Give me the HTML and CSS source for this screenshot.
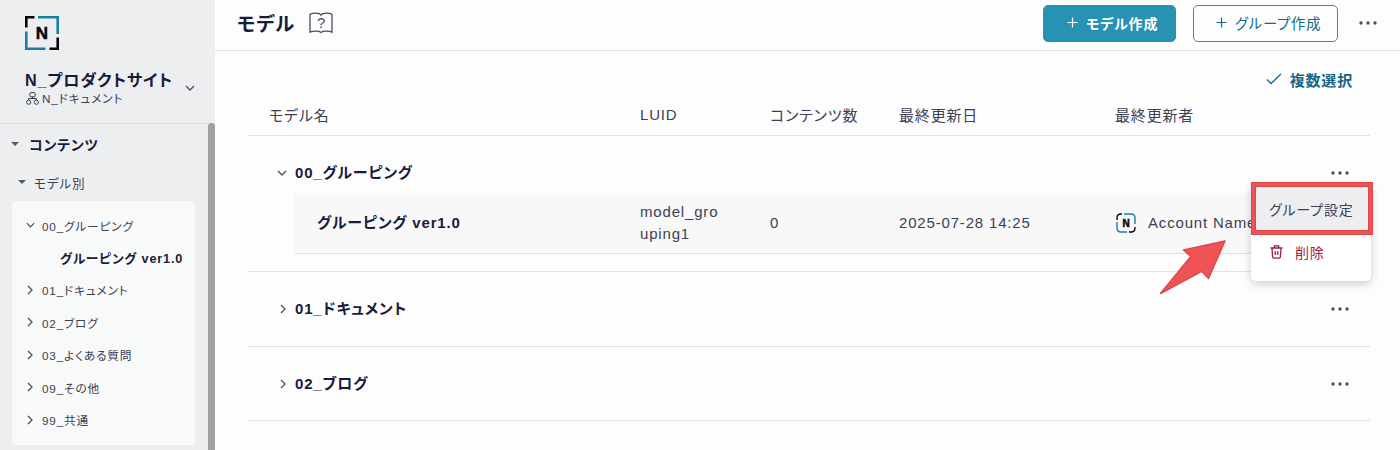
FILE: index.html
```html
<!DOCTYPE html>
<html lang="ja">
<head>
    <meta charset="UTF-8">
    <meta name="viewport" content="width=device-width, initial-scale=1">
    <title>モデル</title>
    <link rel="stylesheet" href="styles.css">
</head>
<body>
<svg class="sprite" width="0" height="0">
    <symbol id="icon-right" viewBox="0 0 8 12"><path d="M2 2l4 4-4 4"/></symbol>
    <symbol id="icon-down" viewBox="0 0 12 8"><path d="M2 2l4 4 4-4"/></symbol>
    <symbol id="icon-dots" viewBox="0 0 20 4"><circle cx="3" cy="2" r="1.7"/><circle cx="10" cy="2" r="1.7"/><circle cx="17" cy="2" r="1.7"/></symbol>
    <symbol id="icon-plus" viewBox="0 0 12 12"><path d="M6 .5v11M.5 6h11"/></symbol>
</svg>

<div class="layout">
    <aside class="sidebar">
        <div class="site">
            <div class="logo">
                <svg viewBox="0 0 34 34"><path class="logo-dark" d="M1.3 11.500V1.3H9.500M24.500 32.7h8.200V21.500"/><path class="logo-blue" d="M13 1.300h19.700v16.700M1.300 15.500v17.200h19.200"/></svg>
                <span>N</span>
            </div>
            <div class="site-switch">
                <div class="site-text">
                    <div class="site-name">N_プロダクトサイト</div>
                    <div class="site-sub">
                        <svg class="icon-tree" viewBox="0 0 13 13"><rect x="3.900" y=".6" width="5.200" height="4.200" rx="1"/><circle cx="2.700" cy="10.200" r="2.100"/><circle cx="10.300" cy="10.200" r="2.100"/><path d="M6.500 4.800v1.700M2.700 8.100V6.500h7.600v1.600"/></svg>
                        <span>N_ドキュメント</span>
                    </div>
                </div>
                <svg class="arrow-down"><use href="#icon-down"/></svg>
            </div>
        </div>
        <nav class="side-nav">
            <div class="side-title"><i class="caret"></i>コンテンツ</div>
            <div class="side-subtitle"><i class="caret"></i>モデル別</div>
            <ul class="side-list">
                <li><svg class="arrow-down"><use href="#icon-down"/></svg>00_グルーピング</li>
                <li class="current">グルーピング ver1.0</li>
                <li><svg class="arrow-right"><use href="#icon-right"/></svg>01_ドキュメント</li>
                <li><svg class="arrow-right"><use href="#icon-right"/></svg>02_ブログ</li>
                <li><svg class="arrow-right"><use href="#icon-right"/></svg>03_よくある質問</li>
                <li><svg class="arrow-right"><use href="#icon-right"/></svg>09_その他</li>
                <li><svg class="arrow-right"><use href="#icon-right"/></svg>99_共通</li>
            </ul>
            <i class="scrollbar"></i>
        </nav>
    </aside>

    <main class="main">
        <header class="header">
            <h1>モデル</h1>
            <div class="help">
                <svg viewBox="0 0 24 22"><path d="M12 3.200C11 1.500 8.500 1.200 6.500 1.200 4.500 1.200 2.500 1.500 1 2.400v17.800c3-1.300 9-1.600 11 .2 2-1.800 8-1.500 11-.2V2.400c-1.500-.9-3.500-1.200-5.500-1.200-2 0-4.500.3-5.500 2z"/></svg>
                <span>?</span>
            </div>
            <div class="header-btns">
                <a class="btn btn-primary"><svg class="plus"><use href="#icon-plus"/></svg>モデル作成</a>
                <a class="btn btn-line"><svg class="plus"><use href="#icon-plus"/></svg>グループ作成</a>
                <svg class="dots"><use href="#icon-dots"/></svg>
            </div>
        </header>

        <section class="content">
            <div class="multi-select">
                <svg viewBox="0 0 16 12"><path d="M1 6.500l4 4L15 1"/></svg>
                複数選択
            </div>
            <div class="table-head cols">
                <span>モデル名</span>
                <span>LUID</span>
                <span>コンテンツ数</span>
                <span>最終更新日</span>
                <span>最終更新者</span>
            </div>

            <div class="group group-open">
                <div class="group-title">
                    <svg class="arrow-down"><use href="#icon-down"/></svg>
                    <span>00_グルーピング</span>
                    <svg class="dots"><use href="#icon-dots"/></svg>
                    <div class="menu">
                        <div class="menu-item active">グループ設定</div>
                        <div class="menu-item danger">
                            <svg viewBox="0 0 13 14"><path d="M.5 3h12M4.300 3V.8h4.400V3M2 3l.6 8.800q.1 1.400 1.400 1.400h5q1.300 0 1.400-1.400L11 3M5.200 6.200v3.800M7.800 6.200v3.800"/></svg>削除
                        </div>
                        <i class="marker"></i>
                        <svg class="pointer" viewBox="0 0 72 60"><path d="M68 4L26.500 13l7.300 6.500L3.500 56.500 44.700 34.300l6.800 7.200z"/></svg>
                    </div>
                </div>
                <div class="model cols">
                    <b>グルーピング ver1.0</b>
                    <span>model_gro<br>uping1</span>
                    <span>0</span>
                    <span>2025-07-28 14:25</span>
                    <span class="account">
                        <span class="logo logo-small">
                            <svg viewBox="0 0 20 20"><path class="logo-dark" d="M1 7V5q0-4 4-4h1M13 19h2q4 0 4-4v-1"/><path class="logo-blue" d="M8 1h7q4 0 4 4v6M1 9v6q0 4 4 4h6"/></svg>
                            <span>N</span>
                        </span>
                        Account Name
                    </span>
                </div>
            </div>
            <div class="group">
                <div class="group-title">
                    <svg class="arrow-right"><use href="#icon-right"/></svg>
                    <span>01_ドキュメント</span>
                    <svg class="dots"><use href="#icon-dots"/></svg>
                </div>
            </div>
            <div class="group">
                <div class="group-title">
                    <svg class="arrow-right"><use href="#icon-right"/></svg>
                    <span>02_ブログ</span>
                    <svg class="dots"><use href="#icon-dots"/></svg>
                </div>
            </div>
        </section>
    </main>
</div>
</body>
</html>
```

FILE: styles.css
```css
* {
    box-sizing: border-box;
}
body {
    margin: 0;
    overflow: hidden;
    background: #fdfdfe;
    color: #3b4054;
    font-family: "Liberation Sans", "Noto Sans CJK JP", sans-serif;
    font-size: 15px;
    letter-spacing: .055em;
    font-feature-settings: "palt";
}
svg {
    display: block;
    flex: none;
    fill: none;
    stroke: currentColor;
    stroke-width: 1.3;
}
.sprite {
    position: absolute;
}
.layout {
    display: flex;
    height: 450px;
}

/* icons */
.arrow-down {
    width: 12px;
    height: 8px;
    color: #4b4f63;
}
.arrow-right {
    width: 8px;
    height: 12px;
    color: #4b4f63;
}
.dots {
    width: 20px;
    height: 4px;
    fill: #4b4f63;
    stroke: none;
}
.plus {
    width: 11px;
    height: 11px;
}
.caret {
    border: 4px solid transparent;
    border-top: 4px solid #565b6c;
    border-bottom: 0;
}

/* logo */
.logo {
    position: relative;
    display: flex;
    align-items: center;
    justify-content: center;
    width: 34px;
    height: 34px;
    color: #07070c;
    font-size: 17px;
    font-weight: bold;
    letter-spacing: 0;
}
.logo svg {
    position: absolute;
    top: 0; left: 0;
    width: 100%;
    height: 100%;
    stroke-width: 2.6;
}
.logo-dark {
    stroke: #07070c;
}
.logo-blue {
    stroke: #16809f;
}
.logo span {
    padding-top: 1px;
    -webkit-text-stroke: .5px;
}
.logo-small {
    width: 20px;
    height: 20px;
    margin-right: 12px;
    font-size: 10px;
}
.logo-small svg {
    stroke-width: 1.4;
}

/* sidebar */
.sidebar {
    display: flex;
    flex-direction: column;
    flex: none;
    width: 215px;
    background: #eceef0;
}
.site {
    flex: none;
    height: 124px;
    padding: 16px 19px 0 25px;
    border-bottom: 1px solid #dfe2e6;
}
.site-switch {
    display: flex;
    justify-content: space-between;
    padding-top: 18px;
}
.site-switch .arrow-down {
    margin-top: 16px;
}
.site-name {
    line-height: 24px;
    color: #181b3a;
    font-size: 16.200px;
    font-weight: bold;
    white-space: nowrap;
}
.site-sub {
    display: flex;
    align-items: center;
    gap: 3px;
    line-height: 13px;
    padding-left: 1px;
    font-size: 11.700px;
}
.icon-tree {
    width: 13px;
    height: 13px;
    stroke-width: 1;
}
.side-nav {
    position: relative;
    flex: 1;
    padding: 7px 20px 0 11px;
}
.side-title,
.side-subtitle {
    display: flex;
    align-items: center;
    height: 26px;
}
.side-title {
    gap: 10px;
    color: #181b3a;
    font-size: 14px;
    font-weight: bold;
}
.side-subtitle {
    gap: 8px;
    margin-top: 12px;
    padding-left: 7px;
    font-size: 12.600px;
}
.side-list {
    height: 244px;
    margin: 6px 0 0 1px;
    padding: 8px 12px;
    border-radius: 4px;
    background: #f8f9f9;
    list-style: none;
}
.side-list li {
    display: flex;
    align-items: center;
    gap: 7px;
    height: 32.400px;
    font-size: 11.700px;
    white-space: nowrap;
}
.side-list .arrow-right {
    margin: 0 1px 0 2px;
}
.side-list .arrow-down {
    width: 11px;
    margin-left: 1px;
    margin-right: -1px;
}
.side-list .current {
    padding-left: 36px;
    color: #181b3a;
    font-size: 12.700px;
    font-weight: bold;
}
.scrollbar {
    position: absolute;
    top: -1px; right: 0; bottom: -4px;
    width: 7px;
    border-radius: 4px;
    background: #a1a1a1;
}

/* header */
.main {
    flex: 1;
    min-width: 0;
}
.header {
    display: flex;
    align-items: center;
    height: 51px;
    padding: 0 22px;
    border-bottom: 1px solid #dfe2e5;
}
.header h1 {
    margin: 0 14px 6px 0;
    color: #181b3a;
    font-size: 19.400px;
}
.help {
    position: relative;
    width: 24px;
    height: 22px;
    margin-bottom: 4px;
    color: #4a4e65;
    font-size: 15px;
    line-height: 21px;
    letter-spacing: 0;
    text-align: center;
}
.help svg {
    position: absolute;
    top: 0; left: 0;
    width: 24px;
    height: 22px;
}
.header-btns {
    display: flex;
    align-items: center;
    margin-left: auto;
    padding-bottom: 4px;
}
.btn {
    display: flex;
    align-items: center;
    gap: 8px;
    height: 37px;
    padding-bottom: 1px;
    border: 1px solid #2792b4;
    border-radius: 5px;
    font-size: 14.300px;
}
.btn-primary {
    width: 133px;
    margin-right: 17px;
    padding-left: 23px;
    background: #2792b4;
    color: #fff;
    font-size: 14px;
    font-weight: bold;
}
.btn-line {
    width: 145px;
    margin-right: 20px;
    padding-left: 22px;
    color: #176886;
}

/* table */
.content {
    padding: 14px 30px 0 33px;
}
.multi-select {
    display: flex;
    align-items: center;
    justify-content: flex-end;
    gap: 8px;
    height: 28px;
    padding-right: 17px;
    color: #176886;
    font-weight: bold;
}
.multi-select svg {
    width: 16px;
    height: 12px;
}
.cols {
    display: grid;
    grid-template-columns: 371px 130px 129px 216px 1fr;
    align-items: center;
}
.table-head {
    height: 43px;
    padding-left: 21px;
    border-bottom: 1px solid #e3e3e5;
}
.group {
    height: 74.500px;
    padding-left: 28px;
    border-bottom: 1px solid #e1e2e4;
}
.group-open {
    height: 136px;
}
.group-title {
    position: relative;
    display: flex;
    align-items: center;
    gap: 7px;
    height: 74px;
    color: #181b3a;
    font-size: 15px;
    font-weight: bold;
}
.group-title > span {
    padding-bottom: 3px;
}
.group-open .group-title {
    height: 57px;
    padding-top: 16px;
}
.group-title .arrow-right {
    margin: 0 1px 0 3px;
}
.group-title .dots {
    margin-left: auto;
    margin-right: 20px;
}
.model {
    grid-template-columns: 323px 130px 129px 216px 1fr;
    height: 61px;
    margin-left: 19px;
    padding-left: 22px;
    border-bottom: 1px solid #dddfe1;
    background: #f8f8f9;
    line-height: 22px;
}
.model b {
    color: #181b3a;
}
.account {
    display: flex;
    align-items: center;
    padding-left: 1px;
    white-space: nowrap;
}

/* group menu */
.menu {
    position: absolute;
    top: 47px; right: -1px;
    z-index: 1;
    width: 120px;
    height: 98px;
    border-radius: 5px;
    background: #fff;
    box-shadow: 0 3px 9px rgba(30, 35, 60, .22);
    color: #3b4054;
    font-size: 14px;
    font-weight: normal;
}
.menu-item {
    display: flex;
    align-items: center;
    height: 34px;
    padding-left: 19px;
    gap: 12px;
}
.menu-item.active {
    height: 52px;
    padding-left: 18px;
    background: #eceef0;
}
.menu-item.danger {
    color: #9d1d48;
}
.menu-item svg {
    width: 13px;
    height: 14px;
}
.marker {
    position: absolute;
    top: -1px; left: 0;
    width: 122px;
    height: 53px;
    border: 4px solid #ef5254;
    outline: 1px solid #d9474b;
    outline-offset: -1px;
    box-shadow: inset 0 0 0 1px #d9474b;
}
.pointer {
    position: absolute;
    top: 54px; left: -94px;
    width: 72px;
    height: 60px;
    fill: #f05355;
    stroke: #dc4a4d;
    stroke-width: 1.5;
    stroke-linejoin: round;
}
```
